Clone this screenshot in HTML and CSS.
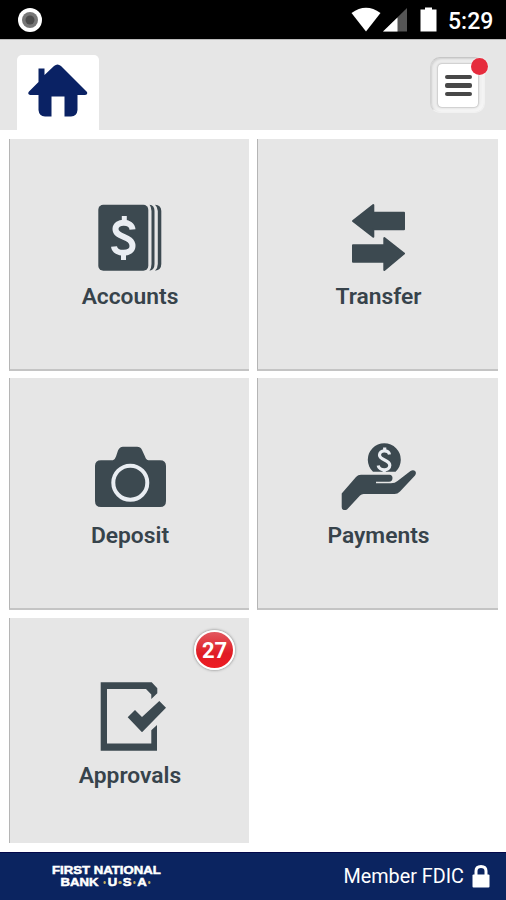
FILE: index.html
```html
<!DOCTYPE html>
<html lang="en">
<head>
    <meta charset="UTF-8">
    <meta name="viewport" content="width=device-width, initial-scale=1.0">
    <title>First National Bank USA</title>
    <link rel="stylesheet" href="styles.css">
</head>
<body>
<div class="status-bar">
    <svg class="record" width="26" height="26" viewBox="0 0 26 26">
        <circle cx="13" cy="13" r="12" fill="#fff"/>
        <circle cx="13" cy="13" r="8" fill="#777"/>
        <circle cx="13" cy="13" r="4.5" fill="#4c4c4c"/>
    </svg>
    <svg class="signals" width="88" height="26" viewBox="0 0 88 26">
        <path d="M.5 6 Q15 -4.500 29.500 6 L15 24.500 Z" fill="#fff"/>
        <path d="M56 1 V24.500 H32 Z" fill="#555"/>
        <path d="M46.500 10.500 V24.500 H32 Z" fill="#fff"/>
        <path d="M69.500 2.500 H74 V.5 H81 V2.500 H85.500 V24.500 H69.500 Z" fill="#fff"/>
    </svg>
    <span class="time">5:29</span>
</div>

<header>
    <a class="home-tab" href="#">
        <svg width="60" height="53" viewBox="0 0 60 53">
            <path d="M10.500 4.500 H16.500 V11 L26 2 Q29.500 -1 33 2 L59 28 Q60 31 57 31 H49.500 V46 Q49 52 43 52.500 H36.500 V32.500 H23.500 V52.500 H17 Q11 52 10.500 46 V31 H2 Q-1 30 1 27.500 L10.500 18 Z" fill="#0a2264"/>
        </svg>
    </a>
    <button class="menu-btn">
        <span class="menu-inner">
            <span class="bar"></span>
            <span class="bar"></span>
            <span class="bar"></span>
        </span>
        <span class="dot"></span>
    </button>
</header>

<main class="tiles">
    <a class="tile" href="#">
        <svg class="icon" viewBox="0 0 80 80">
            <rect x="9.300" y="6.700" width="50" height="66" rx="5"/>
            <path d="M60.500 6.700 Q65.500 7 65.500 13 V66 Q65.500 72 60.500 72.700 Q62.500 70 62.500 66 V13 Q62.500 9 60.500 6.700 Z"/>
            <path d="M66 6.700 Q72.300 7 72.300 13 V66 Q72.300 72 66 72.700 Q68.800 70 68.800 66 V13 Q68.800 9 66 6.700 Z"/>
            <path class="line" d="M43.500 31.500 C43 22.500 26.500 22.500 26.500 31 C26.500 40 43.500 37.500 43.500 48 C43.500 57 26 57 25 48.500" stroke-width="6"/>
            <path class="line" d="M35.300 18 V25 M34.500 54 V62" stroke-width="5"/>
        </svg>
        <span class="label">Accounts</span>
    </a>
    <a class="tile" href="#">
        <svg class="icon wide" viewBox="0 0 81 80">
            <path class="round" d="M16 23 L36.300 7 V14.700 H67 V31.300 H36.300 V38.700 Z"/>
            <path class="round" d="M67 55.500 L47.300 40 V47.300 H16 V63.700 H47.300 V72 Z"/>
        </svg>
        <span class="label">Transfer</span>
    </a>
    <a class="tile" href="#">
        <svg class="icon" viewBox="0 0 80 80">
            <path d="M12 23.300 H24 Q26 22.500 27 19.500 L29 13.500 Q30.500 9.700 34 9.700 H48 Q51.500 9.700 53 13 L56 19.500 Q57.300 23.300 59.500 23.300 H71 Q77 23.300 77 29 V64 Q77 70 71 70 H12 Q6 70 6 64 V29 Q6 23.300 12 23.300 Z"/>
            <circle class="line" cx="41.300" cy="45.700" r="17" stroke-width="4"/>
        </svg>
        <span class="label">Deposit</span>
    </a>
    <a class="tile" href="#">
        <svg class="icon wide" viewBox="0 0 81 80">
            <path d="M36 34.700 A16.500 16.500 0 1 1 58.600 34.700 Z"/>
            <path class="line" d="M52.500 17.500 C51.500 12.500 42.500 12.500 42.500 18 C42.500 23.500 52.800 22.500 52.800 28.300 C52.800 34.500 42 34 41.200 28.500 M47.700 10.500 V14 M47.200 32 V35" stroke-width="3.200"/>
            <path d="M4.700 56.500 L19 40 Q21 37.700 24 37.700 H52.500 Q55.500 38 55.500 41 Q55.500 44.500 52 44.700 H39 V46.300 H54 Q58 46.300 60.500 44 L73.500 34 Q76.500 32.500 78.500 34.500 Q79.500 36.500 78 38.500 L63 54.500 Q60.500 57 57.500 57 H26.500 Q24.500 57 23 58.500 L10 72.500 Q8 73.500 6 72.700 Q4.700 72 4.700 70 Z"/>
        </svg>
        <span class="label">Payments</span>
    </a>
    <a class="tile" href="#">
        <span class="badge">27</span>
        <svg class="icon" viewBox="0 0 80 80">
            <path d="M11.700 5.300 H62.700 L68.300 11.300 V16.300 L62.300 22 V17.500 L57 12 H18 V66.500 H62.300 V53.300 L68 48 V73.700 H11.700 Z"/>
            <path d="M38.700 40.300 L46 33 L53 40 L70.300 24 L77 30.700 L53 55.300 Z"/>
        </svg>
        <span class="label">Approvals</span>
    </a>
</main>

<footer>
    <div class="logo">
        <div>FIRST NATIONAL</div>
        <div>BANK <i></i>U<i></i>S<i></i>A<i></i></div>
    </div>
    <div class="fdic">
        Member FDIC
        <svg width="18" height="24" viewBox="0 0 18 24">
            <path d="M4 11 V6 Q4 1.500 9 1.500 Q14 1.500 14 6 V11" fill="none" stroke="#fff" stroke-width="3"/>
            <rect x="0.500" y="9.500" width="17" height="13" rx="1" fill="#fff"/>
        </svg>
    </div>
</footer>
</body>
</html>
```
FILE: styles.css
```css
*{
    margin: 0;
    padding: 0;
    box-sizing: border-box;
    font-family: Roboto, "Liberation Sans", sans-serif;
}
body{
    display: flex;
    flex-direction: column;
    height: 900px;
    background-color: #fff;
    overflow: hidden;
}
a{
    color: inherit;
    text-decoration: none;
}
svg{
    display: block;
}
.status-bar{
    display: flex;
    align-items: center;
    height: 39px;
    padding: 1px 13px 0 17px;
    background-color: #000;
    color: #fff;
}
.signals{
    margin-left: auto;
}
.time{
    width: 45px;
    margin-left: 9px;
    padding-top: 3px;
    font-size: 23px;
    font-weight: 500;
    white-space: nowrap;
}
header{
    display: flex;
    justify-content: space-between;
    height: 91px;
    padding: 15px 21px 0 17px;
    background-color: #e6e6e6;
    border-top: 1px solid #bbb;
}
.home-tab{
    width: 82px;
    padding: 9px 0 0 11px;
    background-color: #fff;
    border-radius: 5px 5px 0 0;
}
.menu-btn{
    position: relative;
    width: 55px;
    height: 56px;
    margin-top: 2px;
    padding: 6px 7px;
    background-color: #ececec;
    border: 1px solid #f1f1f1;
    border-top-color: #c6c6c6;
    border-left-color: #d2d2d2;
    border-radius: 10px;
    box-shadow: inset 1px 1px 2px #d0d0d0, inset -3px -3px 3px #f5f5f5;
}
.menu-inner{
    display: flex;
    flex-direction: column;
    justify-content: center;
    align-items: center;
    gap: 4px;
    width: 40px;
    height: 43px;
    background-color: #fff;
    border-radius: 4px;
    box-shadow: 0 0 2px #888;
}
.bar{
    width: 27px;
    height: 4.600px;
    border-radius: 2px;
    background-color: #484848;
}
.dot{
    position: absolute;
    top: 0;
    right: -4px;
    width: 17px;
    height: 17px;
    border-radius: 50%;
    background-color: #e62c3d;
    box-shadow: 0 0 2px #fff;
}
.tiles{
    display: grid;
    grid-template-columns: 240px 241px;
    grid-template-rows: 232px 232px 225px;
    column-gap: 8px;
    row-gap: 7.500px;
    height: 722px;
    padding: 8.500px 8px 0 9px;
}
.tile{
    position: relative;
    display: flex;
    flex-direction: column;
    align-items: center;
    padding-top: 59px;
    background-color: #e6e6e6;
    border-left: 1px solid #b5b5b5;
    border-bottom: 2px solid #c4c4c4;
    color: #37434b;
}
.tile:last-child{
    border-bottom: none;
}
.icon{
    width: 80px;
    height: 80px;
    margin-right: 1px;
    fill: #3c4950;
}
.icon.wide{
    width: 81px;
}
.icon .line{
    fill: none;
    stroke: #e9edf2;
}
.icon .round{
    stroke: #3c4950;
    stroke-width: 2;
    stroke-linejoin: round;
}
.label{
    margin-top: 5px;
    padding-left: 1px;
    font-size: 22.800px;
    line-height: 27px;
    font-weight: 600;
}
.badge{
    position: absolute;
    top: 12px;
    right: 14px;
    width: 41px;
    height: 40px;
    line-height: 37px;
    border: 2px solid #fff;
    border-radius: 50%;
    background: linear-gradient(#e2575f, #e01c24 60%, #ee1b22);
    box-shadow: 0 0 3px #777;
    color: #fff;
    font-size: 22px;
    font-weight: bold;
    text-align: center;
}
footer{
    display: flex;
    justify-content: space-between;
    align-items: center;
    height: 48px;
    padding: 0 16px 0 52px;
    background-color: #0b2460;
    border-top: 1px solid #03084a;
    color: #fff;
}
.logo{
    padding-bottom: 2px;
    transform: scaleX(1.145);
    transform-origin: left;
}
.logo div{
    font-family: "Liberation Sans", Arial, sans-serif;
    font-size: 11.500px;
    line-height: 12px;
    font-weight: bold;
    text-align: center;
    white-space: nowrap;
    -webkit-text-stroke: 0.500px #fff;
}
.logo i{
    display: inline-block;
    width: 2.500px;
    height: 3px;
    margin: 0 1.200px 2px;
    border-radius: 50%;
    background-color: #c8b25c;
}
.fdic{
    display: flex;
    align-items: center;
    gap: 8px;
    padding-top: 1px;
    font-size: 19.800px;
    line-height: 24px;
}
```
